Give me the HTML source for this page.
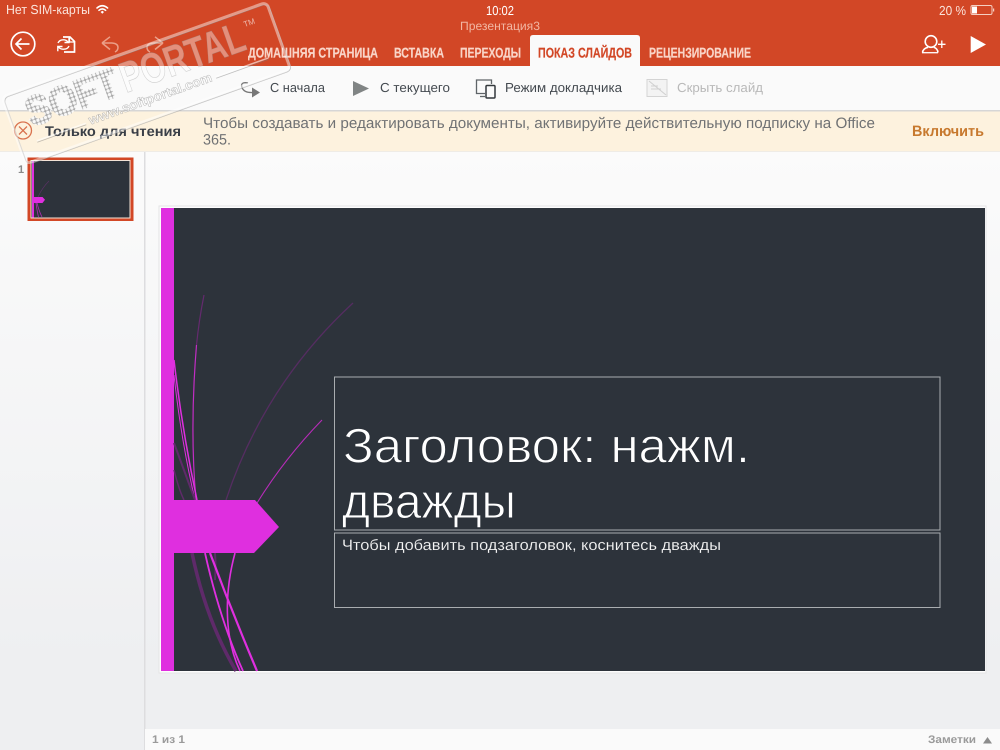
<!DOCTYPE html>
<html lang="ru">
<head>
<meta charset="utf-8">
<title>Презентация3</title>
<style>
html,body{margin:0;padding:0;width:1000px;height:750px;overflow:hidden;background:#f5f5f6}
svg{display:block;position:absolute;left:0;top:0}
text{font-family:"Liberation Sans","DejaVu Sans",sans-serif;text-rendering:geometricPrecision}
.tab{font-family:"Liberation Sans Narrow","Liberation Sans",sans-serif;font-weight:700;font-size:14px;fill:#f9d5c8;stroke:#f9d5c8;stroke-width:.2px}
.tb{font-size:13px;fill:#444a50}
</style>
</head>
<body>
<svg width="1000" height="750" viewBox="0 0 1000 750" xmlns="http://www.w3.org/2000/svg">
<defs>
<linearGradient id="bg" x1="0" y1="0" x2="0" y2="1"><stop offset="0" stop-color="#fbfbfb"/><stop offset=".85" stop-color="#eeeff1"/><stop offset="1" stop-color="#eeeff1"/></linearGradient>
<pattern id="dots" width="4" height="4" patternUnits="userSpaceOnUse"><rect width="4" height="4" fill="#a8a8a8"/><circle cx="2" cy="2" r="1.700" fill="#f8f8f8"/></pattern>
</defs>

<!-- backgrounds -->
<rect y="152" width="1000" height="598" fill="url(#bg)"/>
<rect width="1000" height="66" fill="#d24726"/>
<rect y="66" width="1000" height="44" fill="#fafafa"/>
<rect y="110" width="1000" height="1.5" fill="#d6d6d6"/>
<rect y="111.500" width="1000" height="39.500" fill="#fdf2de"/>
<rect y="151" width="1000" height="1" fill="#efece6"/>
<rect x="144" y="152" width="1.500" height="598" fill="#dddddf"/>
<rect x="145" y="729" width="855" height="21" fill="#fafafa"/>

<!-- status bar -->
<text x="6" y="14" font-size="13" fill="#fbe3da" textLength="84" lengthAdjust="spacingAndGlyphs">Нет SIM-карты</text>
<g fill="none" stroke="#fff" stroke-linecap="round">
<path d="M97 8Q102.300 3.500 107.600 8" stroke-width="1.600"/>
<path d="M99 10.300Q102.300 7.500 105.600 10.300" stroke-width="1.600"/>
</g>
<path d="M100.600 12L102.300 10.800L104 12L102.300 13.700Z" fill="#fff"/>
<text x="486" y="15" font-size="13" fill="#fff" textLength="28" lengthAdjust="spacingAndGlyphs">10:02</text>
<text x="460" y="30" font-size="12" fill="#f2b6a2" textLength="80" lengthAdjust="spacingAndGlyphs">Презентация3</text>
<text x="939" y="15" font-size="13" fill="#fbe3da" textLength="27" lengthAdjust="spacingAndGlyphs">20 %</text>
<rect x="971" y="5.500" width="21" height="9" rx="1.500" fill="none" stroke="#f5cfc2" stroke-width="1"/>
<rect x="972" y="6.500" width="5" height="7" fill="#fff"/>
<rect x="993" y="8.500" width="1.200" height="3" fill="#f5cfc2"/>

<!-- top icons -->
<g fill="none" stroke="#fff" stroke-width="1.700">
<circle cx="23" cy="44" r="11.800"/>
<path d="M29.500 44H16M21.500 38.500L16 44L21.500 49.500"/>
</g>
<g fill="none" stroke="#fff" stroke-width="1.700">
<path d="M63 37H70L74.500 41.500V52H64"/>
<path d="M69.500 37.500V42H74.500" stroke-width="1.300"/>
<path d="M58 43Q59.500 39.500 64 39.800Q66.500 40 68 42M69 37.800V42.500H64.500" stroke-width="1.400"/>
<path d="M69 46Q67.500 49.500 63 49.200Q60 49 58.500 47M57.800 51.200V46.500H62.500" stroke-width="1.400"/>
</g>
<g fill="none" stroke="#eb9f88" stroke-width="1.500">
<path d="M102 43L110 36.800M102 43L110 49.500M102 43H112Q118 43.500 118 47.500Q118 50.500 115 52"/>
<path d="M163 43L155 36.800M163 43L155 49.500M163 43H153Q147 43.500 147 47.500Q147 50.500 150 52"/>
</g>
<g fill="none" stroke="#fff" stroke-width="1.600">
<circle cx="931" cy="41.500" r="5.800"/>
<path d="M922.500 52.500Q923 48.500 928 47.300M938 52.500Q937.500 48.500 933.800 47.300"/>
<path d="M922 52.700H938" stroke-width="1.300"/>
<path d="M938 44.300H945.500M941.800 40.500V48" stroke-width="1.300"/>
</g>
<path d="M970.700 36L986 44.500L970.700 53Z" fill="#fff"/>

<!-- tabs -->
<path d="M530 66V38Q530 35 533 35H637Q640 35 640 38V66Z" fill="#fafafa"/>
<text class="tab" x="248" y="57.500" textLength="130" lengthAdjust="spacingAndGlyphs">ДОМАШНЯЯ СТРАНИЦА</text>
<text class="tab" x="394" y="57.500" textLength="50" lengthAdjust="spacingAndGlyphs">ВСТАВКА</text>
<text class="tab" x="460" y="57.500" textLength="61" lengthAdjust="spacingAndGlyphs">ПЕРЕХОДЫ</text>
<text class="tab" x="538" y="57.500" textLength="94" lengthAdjust="spacingAndGlyphs" style="fill:#d24726;stroke:#d24726">ПОКАЗ СЛАЙДОВ</text>
<text class="tab" x="649" y="57.500" textLength="102" lengthAdjust="spacingAndGlyphs">РЕЦЕНЗИРОВАНИЕ</text>

<!-- toolbar -->
<path d="M248 83Q240 81.500 242 87.500Q244 93 253 92.500" fill="none" stroke="#777" stroke-width="1.300"/>
<path d="M252 87.500L260 92.500L252 97.500Z" fill="#777"/>
<text class="tb" x="270" y="92" textLength="55" lengthAdjust="spacingAndGlyphs">С начала</text>
<path d="M353 81L369 88.500L353 96Z" fill="#808484"/>
<text class="tb" x="380" y="92" textLength="70" lengthAdjust="spacingAndGlyphs">С текущего</text>
<path d="M485 93.500H476.500V80H491.500V84" fill="none" stroke="#5f6468" stroke-width="1.300"/>
<path d="M480 96.500H485" stroke="#5f6468" stroke-width="1.300"/>
<rect x="486" y="85.500" width="9" height="12.500" rx="1" fill="#fafafa" stroke="#33383c" stroke-width="1.500"/>
<text class="tb" x="505" y="92" textLength="117" lengthAdjust="spacingAndGlyphs">Режим докладчика</text>
<rect x="647" y="79.500" width="20" height="17" fill="#f3f3f3" stroke="#d4d4d4"/>
<path d="M649 81L666 95M651 86H658M651 89H661" stroke="#d0d0d0" stroke-width="1"/>
<text class="tb" x="677" y="92" textLength="86" lengthAdjust="spacingAndGlyphs" style="fill:#b9b9b9">Скрыть слайд</text>

<!-- banner -->
<g fill="none" stroke="#d9734f" stroke-width="1.300">
<circle cx="23" cy="130.500" r="8.500"/>
<path d="M19 126.500L27 134.500M27 126.500L19 134.500"/>
</g>
<text x="45" y="136" font-size="14" font-weight="700" fill="#3a3f47" textLength="136" lengthAdjust="spacingAndGlyphs">Только для чтения</text>
<text x="203" y="128" font-size="15" fill="#707274" textLength="672" lengthAdjust="spacingAndGlyphs">Чтобы создавать и редактировать документы, активируйте действительную подписку на Office</text>
<text x="203" y="144.500" font-size="15" fill="#707274" textLength="28" lengthAdjust="spacingAndGlyphs">365.</text>
<text x="912" y="136" font-size="15" font-weight="700" fill="#c7792e" textLength="72" lengthAdjust="spacingAndGlyphs">Включить</text>

<!-- thumbnail -->
<text x="18" y="173" font-size="11" font-weight="700" fill="#8a8a8a">1</text>
<rect x="27.500" y="157.500" width="106" height="63.500" fill="#d24726"/>
<rect x="30.500" y="160" width="100" height="58.500" fill="#f3e3d6"/>
<rect x="31.500" y="161" width="98" height="56.500" fill="#2d333b"/>
<rect x="32" y="161" width="2" height="56.500" fill="#df2fdf"/>
<path d="M33 197H42.500L45 199.800L42.500 203H33Z" fill="#df2fdf"/>
<path d="M37 203Q39 211 42 217M36 203Q37 211 38.500 217" stroke="#b02cb2" stroke-width=".8" fill="none"/>
<path d="M38 197Q42 188 49 181" stroke="#5d3168" stroke-width=".6" fill="none"/>

<!-- slide -->
<rect x="158.500" y="205.500" width="828" height="468" fill="#e4e4e5"/>
<rect x="159.500" y="206.500" width="826" height="466" fill="#fdfdfd"/>
<rect x="161" y="208" width="824" height="463" fill="#2d333b"/>
<rect x="161" y="208" width="13" height="463" fill="#df2fdf"/>
<g fill="none" stroke-linecap="butt">
<!-- upper curves -->
<path d="M204 295Q199 320 196.500 345" stroke="#642a6e" stroke-width="1.200"/>
<path d="M196.500 345C192 400 191.500 450 196 500" stroke="#c22dc4" stroke-width="1.200"/>
<path d="M353 303Q264 385 226 500" stroke="#552d61" stroke-width="1.300"/>
<path d="M322 420Q285 458 257 503" stroke="#b72bb9" stroke-width="1.100"/>
<path d="M174 360Q182 430 197 500" stroke="#df2fdf" stroke-width="1.500"/>
<path d="M174 375Q181 440 195 500" stroke="#df2fdf" stroke-width="1"/>
<path d="M174 443Q184 470 195 500" stroke="#5f2a6a" stroke-width="2"/>
<path d="M174 470Q179 490 184 500" stroke="#5f2a6a" stroke-width="1.500"/>
<!-- lower curves -->
<path d="M192 553Q206 620 236 671" stroke="#5f2a6a" stroke-width="3.500"/>
<path d="M215 553Q216 565 215 580" stroke="#5f2a6a" stroke-width="2"/>
<path d="M205 553Q220 620 243 671" stroke="#df2fdf" stroke-width="1.800"/>
<path d="M210 553Q232 612 257 671" stroke="#df2fdf" stroke-width="2.200"/>
<path d="M235 553C225 590 223 635 240 671" stroke="#df2fdf" stroke-width="1.600"/>
</g>
<path d="M174 500H255L279 527L254 553H174Z" fill="#df2fdf"/>

<rect x="334.500" y="377" width="605.500" height="153" fill="none" stroke="#a9adb0" stroke-width="1"/>
<rect x="334.500" y="533" width="605.500" height="74.500" fill="none" stroke="#a9adb0" stroke-width="1"/>
<text x="343" y="462.500" font-size="49" fill="#fff" stroke="#2d333b" stroke-width="1" textLength="407" lengthAdjust="spacingAndGlyphs">Заголовок: нажм.</text>
<text x="342" y="518" font-size="49" fill="#fff" stroke="#2d333b" stroke-width="1" textLength="174" lengthAdjust="spacingAndGlyphs">дважды</text>
<text x="342" y="550" font-size="15" fill="#f6f6f6" stroke="#2d333b" stroke-width=".12" textLength="379" lengthAdjust="spacingAndGlyphs">Чтобы добавить подзаголовок, коснитесь дважды</text>

<!-- footer -->
<text x="152" y="743" font-size="11" font-weight="700" fill="#9a9a9a" textLength="33" lengthAdjust="spacingAndGlyphs">1 из 1</text>
<text x="928" y="743" font-size="11" font-weight="700" fill="#9a9a9a" textLength="48" lengthAdjust="spacingAndGlyphs">Заметки</text>
<path d="M983 743.500L987.500 737L992 743.500Z" fill="#8c8c8c"/>

<!-- watermark -->
<g transform="translate(2 97) rotate(-19.700)">
<rect x="1" y="1.500" width="281" height="71" rx="5" fill="none" stroke="#8a8a8a" stroke-opacity=".5" stroke-width="1"/>
<rect x="0" y="0" width="281" height="71" rx="5" fill="none" stroke="#fff" stroke-opacity=".45" stroke-width="3"/>
<text x="18" y="38" font-size="41" font-weight="700" fill="url(#dots)" stroke="url(#dots)" stroke-width="2" textLength="96" lengthAdjust="spacingAndGlyphs">SOFT</text>
<text x="118" y="38" font-size="43" font-weight="700" fill="#fff" fill-opacity=".4" stroke="#8a8a8a" stroke-opacity=".35" stroke-width=".7" textLength="130" lengthAdjust="spacingAndGlyphs">PORTAL</text>
<text x="252" y="16" font-size="8" fill="#fff" fill-opacity=".6">TM</text>
<text x="74" y="56" font-size="13" font-weight="700" fill="#fff" fill-opacity=".75" stroke="#777" stroke-opacity=".5" stroke-width=".5" textLength="130" lengthAdjust="spacingAndGlyphs">www.softportal.com</text>
<path d="M18 53H70M208 53H264" stroke="#fff" stroke-opacity=".6" stroke-width="1.500"/>
<path d="M18 54.500H70M208 54.500H264" stroke="#777" stroke-opacity=".45" stroke-width=".8"/>
</g>
</svg>
</body>
</html>
